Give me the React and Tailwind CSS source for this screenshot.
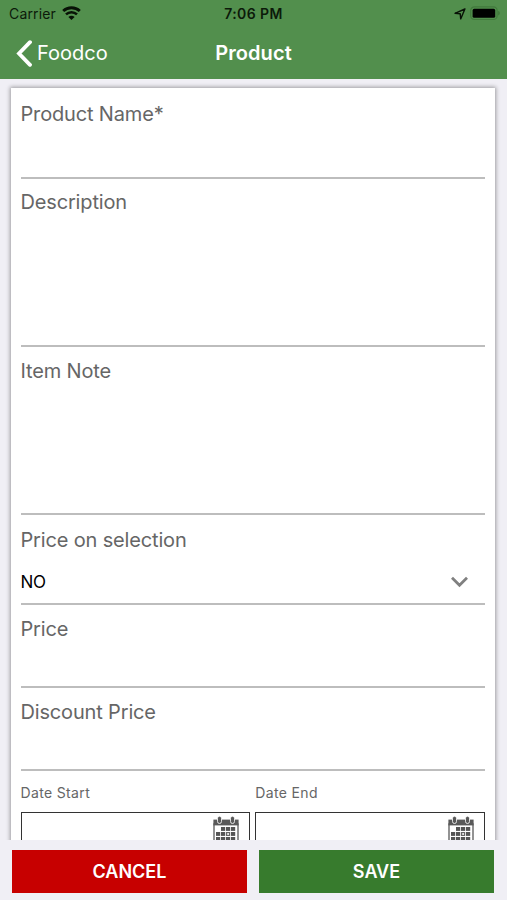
function WifiIcon() {
  return (
    <svg width="19" height="15" viewBox="0 0 19 15" fill="none" stroke="#081206">
      <path d="M1.2 5C5.8.6 13.2.6 17.8 5" strokeWidth="2.9" />
      <path d="M4 8.4c3.1-2.9 7.9-2.9 11 0" strokeWidth="2.6" />
      <path d="M9.5 14 6.4 10.9c1.7-1.6 4.5-1.6 6.2 0Z" fill="#081206" stroke="none" />
    </svg>
  );
}

function LocationIcon() {
  return (
    <svg width="12" height="12" viewBox="0 0 12 12" fill="none">
      <path
        d="M10.9 1 1 5.3l5.2.4.5 5.2Z"
        stroke="#081206"
        strokeWidth="1.4"
        strokeLinejoin="round"
      />
    </svg>
  );
}

function BatteryIcon() {
  return (
    <svg width="31" height="15" viewBox="0 0 31 15" fill="none">
      <rect x="0.7" y="0.9" width="26.4" height="12.6" rx="3.6" stroke="#417a3c" strokeWidth="1.2" />
      <rect x="2.6" y="2.8" width="22.6" height="9" rx="1.6" fill="#000" />
      <path d="M28.4 5v4.4c1.6-.6 1.6-3.8 0-4.4Z" fill="#3b6e36" />
    </svg>
  );
}

function CalendarIcon() {
  const cells = [
    [8, 11], [13, 11], [18, 11],
    [3, 16], [8, 16], [18, 16],
    [3, 21], [8, 21], [13, 21], [18, 21],
  ];

  return (
    <svg width="26" height="29" viewBox="0 0 26 29" fill="none">
      <rect x="1" y="8" width="24" height="20" fill="#fff" stroke="#666" strokeWidth="1.4" />
      <path d="M.4 3.6h25.2v5.8H.4Z" fill="#595959" />
      <rect x="4.5" y="0.2" width="4" height="7.3" rx="2" fill="#595959" stroke="#fff" strokeWidth="0.8" />
      <rect x="17.5" y="0.2" width="4" height="7.3" rx="2" fill="#595959" stroke="#fff" strokeWidth="0.8" />
      {cells.map(([x, y]) => (
        <rect key={`${x}-${y}`} x={x} y={y} width="4.2" height="3.9" fill="#555" />
      ))}
      <rect x="13.6" y="16.6" width="3" height="2.8" stroke="#666" strokeWidth="1.2" />
    </svg>
  );
}

function Field({ label, className, children }) {
  return (
    <div className={`border-b-2 border-[#bdbdbd] ${className}`}>
      <label className="block text-[20px] leading-6 tracking-[-0.16px] text-[#666]">{label}</label>
      {children}
    </div>
  );
}

function DateField({ label }) {
  return (
    <div className="flex-1">
      <label className="block text-[14px] leading-5 tracking-[0.35px] text-[#666]">{label}</label>
      <div className="mt-[9px] flex h-[42px] justify-end border-[1.5px] border-[#333] pr-[10px] pt-[3px]">
        <CalendarIcon />
      </div>
    </div>
  );
}

export default function App() {
  return (
    <div className="flex h-[900px] w-[507px] flex-col overflow-hidden bg-[#f0eff5] font-['Inter','Liberation_Sans',sans-serif]">
      <header className="h-[79px] shrink-0 bg-[#528f4d]">
        <div className="grid h-[27px] grid-cols-3 items-center pl-[9px] pr-[6px] text-[14px] text-[#0c1a0a]">
          <div className="flex items-center gap-[6px]">
            <span className="tracking-[0.15px]">Carrier</span>
            <WifiIcon />
          </div>
          <span className="pr-[3px] text-center font-semibold tracking-[0.4px]">7:06 PM</span>
          <div className="flex items-center justify-end gap-[4px]">
            <LocationIcon />
            <BatteryIcon />
          </div>
        </div>
        <div className="grid h-[52px] grid-cols-3 items-center px-4 text-[20px] text-white">
          <div className="flex items-center gap-[5px]">
            <svg width="16" height="27" viewBox="0 0 16 27" fill="none">
              <path d="M14 2.2 3 13.5 14 24.8" stroke="#fff" strokeWidth="3.8" strokeLinecap="round" />
            </svg>
            <span>Foodco</span>
          </div>
          <h1 className="text-center font-semibold tracking-[0.1px]">Product</h1>
        </div>
      </header>

      <main className="h-[761px] shrink-0 overflow-hidden pl-[11px] pr-3 pt-[9px]">
        <div className="h-[800px] bg-white pl-[9.5px] pr-[10px] pt-[14px] shadow-[0_0_4px_1px_rgba(0,0,0,0.35)]">
          <Field label="Product Name*" className="h-[77px]" />
          <Field label="Description" className="h-[168px] pt-[11px]" />
          <Field label="Item Note" className="h-[168px] pt-3" />
          <Field label="Price on selection" className="h-[90px] pt-[13px]">
            <div className="mt-[18px] flex items-center justify-between pr-4 text-[17px] leading-6 tracking-[-0.3px] text-black">
              <span>NO</span>
              <svg width="19" height="12" viewBox="0 0 19 12" fill="none">
                <path d="m2 1.8 7.5 7.5L17 1.8" stroke="#808080" strokeWidth="2.8" />
              </svg>
            </div>
          </Field>
          <Field label="Price" className="h-[83px] pt-3" />
          <Field label="Discount Price" className="h-[83px] pt-3" />
          <div className="flex gap-[5px] pt-3">
            <DateField label="Date Start" />
            <DateField label="Date End" />
          </div>
        </div>
      </main>

      <footer className="flex gap-3 pl-3 pr-[13px] pt-[10px] text-[18px] font-semibold text-white">
        <button className="h-[43px] flex-1 bg-[#c70000]">CANCEL</button>
        <button className="h-[43px] flex-1 bg-[#377b2d]">SAVE</button>
      </footer>
    </div>
  );
}
